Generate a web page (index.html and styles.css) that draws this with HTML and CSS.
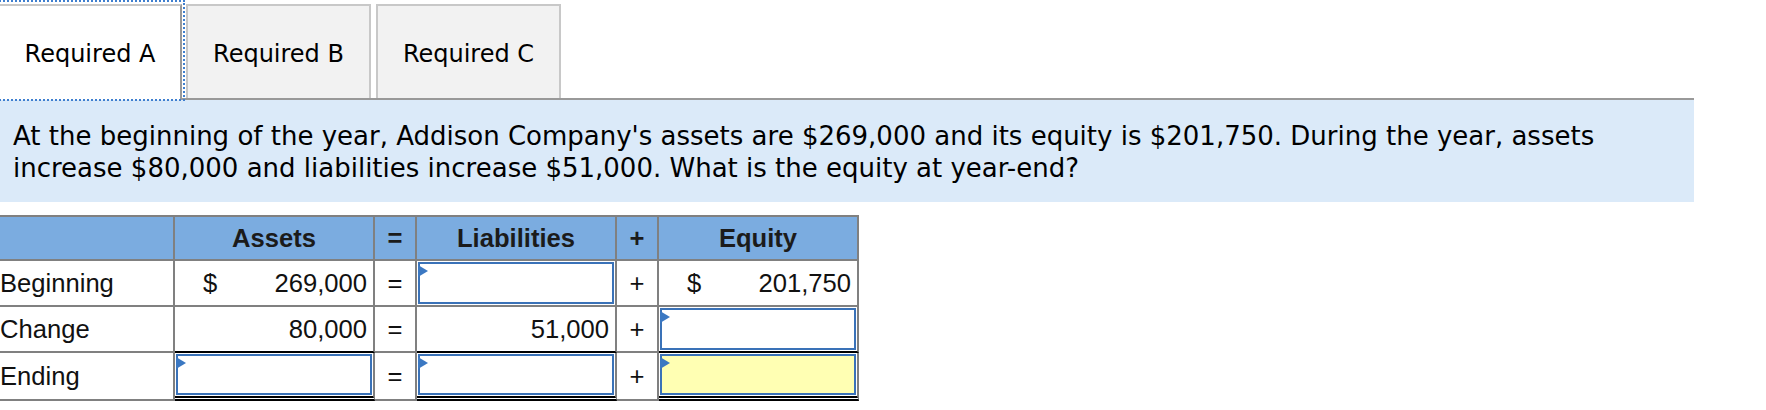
FILE: index.html
```html
<!DOCTYPE html>
<html lang="en">
<head>
<meta charset="utf-8">
<title>Required A</title>
<link rel="stylesheet" href="styles.css">
</head>
<body>
<div class="page">
  <div class="tabs">
    <div class="tab tab-active">Required A</div>
    <div class="tab tab-b">Required B</div>
    <div class="tab">Required C</div>
  </div>
  <div class="question">At the beginning of the year, Addison Company's assets are $269,000 and its equity is $201,750. During the year, assets increase $80,000 and liabilities increase $51,000. What is the equity at year-end?</div>
  <div class="eq">
    <div class="c head"></div>
    <div class="c head">Assets</div>
    <div class="c head op">=</div>
    <div class="c head">Liabilities</div>
    <div class="c head op">+</div>
    <div class="c head">Equity</div>

    <div class="c label">Beginning</div>
    <div class="c num"><span>$</span><span>269,000</span></div>
    <div class="c op">=</div>
    <div class="c entry"><div class="field"></div></div>
    <div class="c op">+</div>
    <div class="c num"><span>$</span><span>201,750</span></div>

    <div class="c label">Change</div>
    <div class="c num right sub">80,000</div>
    <div class="c op">=</div>
    <div class="c num right sub">51,000</div>
    <div class="c op">+</div>
    <div class="c entry sub"><div class="field"></div></div>

    <div class="c label">Ending</div>
    <div class="c entry total"><div class="field"></div></div>
    <div class="c op">=</div>
    <div class="c entry total"><div class="field"></div></div>
    <div class="c op">+</div>
    <div class="c entry total"><div class="field field-yellow"></div></div>
  </div>
</div>
</body>
</html>
```

FILE: styles.css
```css
html, body {
  margin: 0;
  padding: 0;
  background: #ffffff;
}

.page {
  width: 1694px;
}

.tabs {
  display: flex;
  padding-top: 4px;
  border-bottom: 2px solid #999999;
}

.tab {
  box-sizing: border-box;
  width: 185px;
  height: 94px;
  margin-right: 5px;
  display: flex;
  align-items: center;
  justify-content: center;
  padding-top: 4px;
  background: #f2f2f2;
  border: 2px solid #c8c8c8;
  border-bottom: none;
  font-family: "DejaVu Sans", Verdana, sans-serif;
  font-size: 24px;
  color: #000000;
}

.tab-active {
  position: relative;
  width: 182px;
  height: 96px;
  margin-right: 4px;
  margin-bottom: -2px;
  padding-bottom: 2px;
  background: #ffffff;
  border-left: none;
  border-right-color: #999999;
}

.tab-active::after {
  content: "";
  position: absolute;
  left: -4px;
  top: -6px;
  right: -5px;
  bottom: -1px;
  border: 2px dotted #3f7fcf;
}

.question {
  box-sizing: border-box;
  height: 102px;
  padding: 20px 13px 0 13px;
  background: #dbeaf9;
  font-family: "DejaVu Sans", Verdana, sans-serif;
  font-size: 26px;
  line-height: 32px;
  color: #000000;
}

.eq {
  display: grid;
  grid-template-columns: 175px 200px 42px 200px 42px 200px;
  grid-template-rows: 44px 46px 46px 48px;
  width: 859px;
  margin-top: 13px;
  border-top: 2px solid #808080;
  font-family: "Liberation Sans", Arial, sans-serif;
  font-size: 25.6px;
  color: #111111;
}

.c {
  box-sizing: border-box;
  border-right: 2px solid #808080;
  border-bottom: 2px solid #808080;
  display: flex;
  align-items: center;
}

.head {
  justify-content: center;
  background: #7bace0;
  font-weight: bold;
  color: #1b1b1b;
}

.label {
  justify-content: flex-start;
}

.op {
  justify-content: center;
}

.num {
  justify-content: space-between;
  padding: 0 6px 0 28px;
}

.num.right {
  justify-content: flex-end;
}

.sub {
  border-bottom-color: #000000;
}

.entry {
  padding: 1px;
  align-items: stretch;
}

.entry .field {
  flex: 1;
}

.total {
  border-bottom: 5px double #000000;
}

.field {
  position: relative;
  box-sizing: border-box;
  border: 2px solid #3a72b8;
  background: #ffffff;
}

.field::before {
  content: "";
  position: absolute;
  left: -2px;
  top: 1px;
  width: 0;
  height: 0;
  border-left: 10px solid #3b78c2;
  border-top: 6px solid transparent;
  border-bottom: 6px solid transparent;
}

.field-yellow {
  background: #ffffb3;
}
```
